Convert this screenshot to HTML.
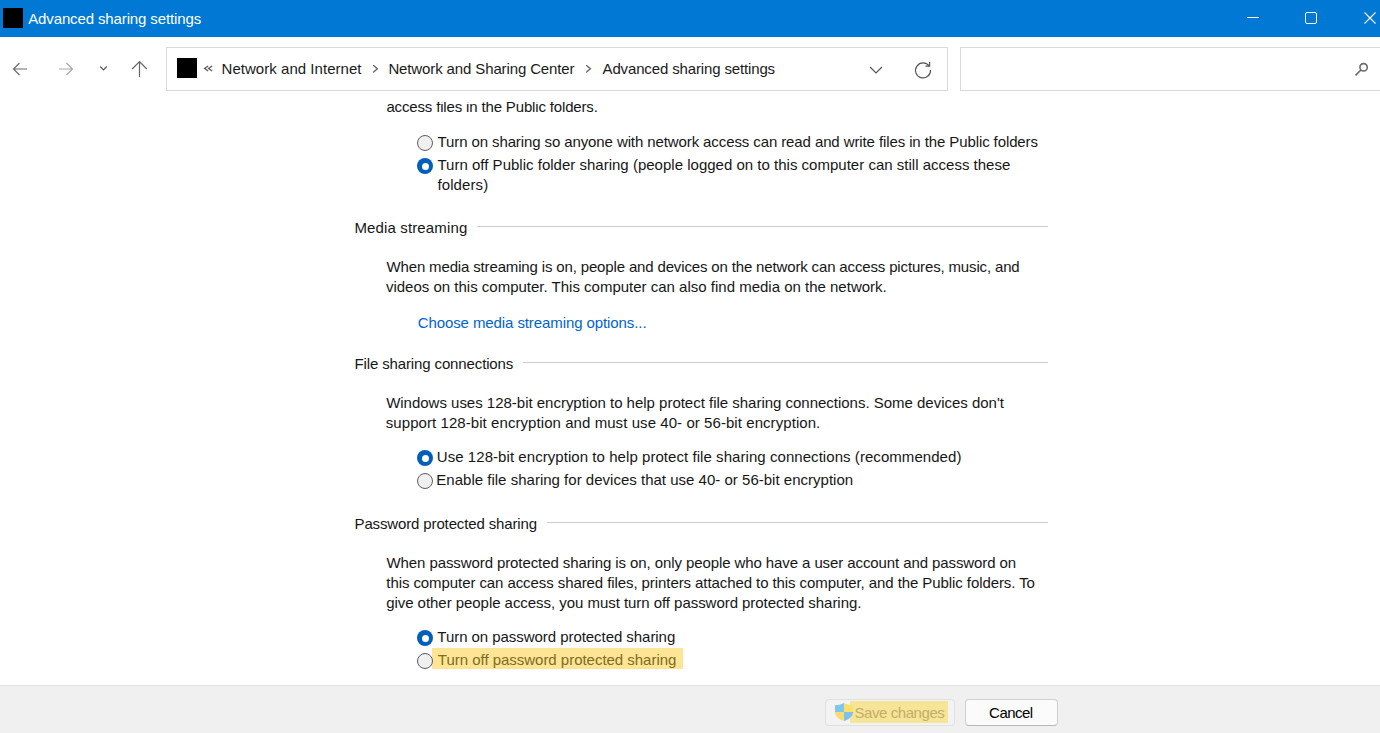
<!DOCTYPE html>
<html><head><meta charset="utf-8"><style>
html,body{margin:0;padding:0;width:1380px;height:733px;overflow:hidden;background:#fff;position:relative}
.t{position:absolute;white-space:pre;font-family:"Liberation Sans", sans-serif;font-size:15px;line-height:20px}
</style></head><body>
<div style="position:absolute;left:0;top:0;width:1380px;height:37px;background:#0078D4"></div><div style="position:absolute;left:3px;top:8px;width:20px;height:20px;background:#000"></div><div class="t" style="left:28.20px;top:8.80px;letter-spacing:-0.1243px;color:#fff;font-size:15px;">Advanced sharing settings</div>
<div style="position:absolute;left:1247px;top:17px;width:12px;height:1px;background:#fff"></div><div style="position:absolute;left:1305px;top:12px;width:10px;height:10px;border:1px solid #fff;border-radius:2px"></div><svg style="position:absolute;left:1364px;top:12px" width="12" height="12" viewBox="0 0 12 12"><path d="M0.5 0.5L11.5 11.5M11.5 0.5L0.5 11.5" stroke="#fff" stroke-width="1.1"/></svg><svg style="position:absolute;left:12px;top:62px" width="16" height="14" viewBox="0 0 16 14"><path d="M15 7H1.5M7.5 1L1.5 7L7.5 13" fill="none" stroke="#6b6b6b" stroke-width="1.2"/></svg><svg style="position:absolute;left:58px;top:62px" width="16" height="14" viewBox="0 0 16 14"><path d="M1 7H14.5M8.5 1L14.5 7L8.5 13" fill="none" stroke="#a8a8a8" stroke-width="1.2"/></svg><svg style="position:absolute;left:99px;top:65px" width="10" height="7" viewBox="0 0 10 7"><path d="M1.2 1.5L4.5 4.8L7.8 1.5" fill="none" stroke="#555" stroke-width="1.2"/></svg><svg style="position:absolute;left:131px;top:60px" width="18" height="18" viewBox="0 0 18 18"><path d="M8.5 17V1.8M1.2 9L8.5 1.7L15.8 9" fill="none" stroke="#666" stroke-width="1.2"/></svg><div style="position:absolute;left:166px;top:47px;width:780px;height:42px;border:1px solid #d9d9d9;background:#fff"></div><div style="position:absolute;left:177px;top:58px;width:20px;height:20px;background:#000"></div><svg style="position:absolute;left:200px;top:60px" width="16" height="16" viewBox="0 0 16 16"><path d="M7.8 6.3L4.6 8.5L7.8 10.7M11.8 6.3L8.6 8.5L11.8 10.7" fill="none" stroke="#5a5a5a" stroke-width="1.3" stroke-linecap="round"/></svg><div class="t" style="left:221.55px;top:58.80px;letter-spacing:0.037px;color:#1a1a1a;font-size:15px;">Network and Internet</div>
<svg style="position:absolute;left:372px;top:64px" width="8" height="10" viewBox="0 0 8 10"><path d="M1.6 1.6L5.4 4.8L1.6 8" fill="none" stroke="#5f5f5f" stroke-width="1.25" stroke-linecap="round"/></svg><div class="t" style="left:388.40px;top:58.80px;letter-spacing:-0.124px;color:#1a1a1a;font-size:15px;">Network and Sharing Center</div>
<svg style="position:absolute;left:585px;top:64px" width="8" height="10" viewBox="0 0 8 10"><path d="M1.6 1.6L5.4 4.8L1.6 8" fill="none" stroke="#5f5f5f" stroke-width="1.25" stroke-linecap="round"/></svg><div class="t" style="left:602.55px;top:58.80px;letter-spacing:-0.1421px;color:#1a1a1a;font-size:15px;">Advanced sharing settings</div>
<svg style="position:absolute;left:869px;top:66px" width="14" height="8" viewBox="0 0 14 8"><path d="M1 1L7 7L13 1" fill="none" stroke="#555" stroke-width="1.2"/></svg><svg style="position:absolute;left:913px;top:60px" width="20" height="20" viewBox="0 0 20 20"><path d="M16.2 6.2A7.5 7.5 0 1 0 17.5 10" fill="none" stroke="#555" stroke-width="1.2"/><path d="M12.5 6.2H16.6V2" fill="none" stroke="#555" stroke-width="1.2"/></svg><div style="position:absolute;left:960px;top:47px;width:430px;height:42px;border:1px solid #d9d9d9;background:#fff"></div><svg style="position:absolute;left:1353px;top:61px" width="18" height="17" viewBox="0 0 18 17"><circle cx="10.6" cy="6.3" r="3.7" fill="none" stroke="#6a6a6a" stroke-width="1.6"/><path d="M7.9 9L2.5 14.4" stroke="#6a6a6a" stroke-width="1.6"/></svg><div style="position:absolute;left:0;top:102px;width:1380px;height:583px;overflow:hidden"><div class="t" style="left:386.45px;top:-5.20px;letter-spacing:-0.1573px;color:#161616;font-size:15px;">access files in the Public folders.</div>
<div style="position:absolute;left:417px;top:33px;width:14px;height:14px;border-radius:50%;border:1px solid #5c5c5c;background:#f0f0f0"></div>
<div class="t" style="left:437.50px;top:29.80px;letter-spacing:-0.1018px;color:#161616;font-size:15px;">Turn on sharing so anyone with network access can read and write files in the Public folders</div>
<div style="position:absolute;left:417px;top:56px;width:16px;height:16px;border-radius:50%;background:#005FB8"></div><div style="position:absolute;left:421.5px;top:60.5px;width:7px;height:7px;border-radius:50%;background:#fff"></div>
<div class="t" style="left:437.50px;top:52.80px;letter-spacing:0.0096px;color:#161616;font-size:15px;">Turn off Public folder sharing (people logged on to this computer can still access these</div>
<div class="t" style="left:437.50px;top:72.80px;letter-spacing:0.0903px;color:#161616;font-size:15px;">folders)</div>
<div class="t" style="left:354.45px;top:115.80px;letter-spacing:0.1382px;color:#161616;font-size:15px;">Media streaming</div>
<div style="position:absolute;left:477px;top:124px;width:571px;height:1px;background:#cbcbcb"></div>
<div class="t" style="left:386.50px;top:154.80px;letter-spacing:-0.1501px;color:#161616;font-size:15px;">When media streaming is on, people and devices on the network can access pictures, music, and</div>
<div class="t" style="left:385.95px;top:174.80px;letter-spacing:-0.0007px;color:#161616;font-size:15px;">videos on this computer. This computer can also find media on the network.</div>
<div class="t" style="left:417.65px;top:210.80px;letter-spacing:-0.0883px;color:#0064D0;font-size:15px;">Choose media streaming options...</div>
<div class="t" style="left:354.45px;top:251.80px;letter-spacing:-0.1254px;color:#161616;font-size:15px;">File sharing connections</div>
<div style="position:absolute;left:523px;top:260px;width:525px;height:1px;background:#cbcbcb"></div>
<div class="t" style="left:386.15px;top:290.80px;letter-spacing:-0.0137px;color:#161616;font-size:15px;">Windows uses 128-bit encryption to help protect file sharing connections. Some devices don't</div>
<div class="t" style="left:385.80px;top:310.80px;letter-spacing:0.0662px;color:#161616;font-size:15px;">support 128-bit encryption and must use 40- or 56-bit encryption.</div>
<div style="position:absolute;left:417px;top:348px;width:16px;height:16px;border-radius:50%;background:#005FB8"></div><div style="position:absolute;left:421.5px;top:352.5px;width:7px;height:7px;border-radius:50%;background:#fff"></div>
<div class="t" style="left:436.80px;top:344.80px;letter-spacing:0.0567px;color:#161616;font-size:15px;">Use 128-bit encryption to help protect file sharing connections (recommended)</div>
<div style="position:absolute;left:417px;top:371px;width:14px;height:14px;border-radius:50%;border:1px solid #5c5c5c;background:#f0f0f0"></div>
<div class="t" style="left:436.30px;top:367.80px;letter-spacing:0.0119px;color:#161616;font-size:15px;">Enable file sharing for devices that use 40- or 56-bit encryption</div>
<div class="t" style="left:354.55px;top:411.80px;letter-spacing:-0.1378px;color:#161616;font-size:15px;">Password protected sharing</div>
<div style="position:absolute;left:547px;top:420px;width:501px;height:1px;background:#cbcbcb"></div>
<div class="t" style="left:386.55px;top:450.80px;letter-spacing:-0.093px;color:#161616;font-size:15px;">When password protected sharing is on, only people who have a user account and password on</div>
<div class="t" style="left:386.35px;top:470.80px;letter-spacing:-0.0816px;color:#161616;font-size:15px;">this computer can access shared files, printers attached to this computer, and the Public folders. To</div>
<div class="t" style="left:386.15px;top:490.80px;letter-spacing:-0.0438px;color:#161616;font-size:15px;">give other people access, you must turn off password protected sharing.</div>
<div style="position:absolute;left:417px;top:528px;width:16px;height:16px;border-radius:50%;background:#005FB8"></div><div style="position:absolute;left:421.5px;top:532.5px;width:7px;height:7px;border-radius:50%;background:#fff"></div>
<div class="t" style="left:437.35px;top:524.80px;letter-spacing:-0.0506px;color:#161616;font-size:15px;">Turn on password protected sharing</div>
<div style="position:absolute;left:432px;top:546px;width:251px;height:21px;background:#FDE595"></div><div style="position:absolute;left:417px;top:551px;width:14px;height:14px;border-radius:50%;border:1px solid #5c5c5c;background:#f0f0f0"></div>
<div class="t" style="left:437.85px;top:547.80px;letter-spacing:-0.0221px;color:#7d6c22;font-size:15px;">Turn off password protected sharing</div>
</div><div style="position:absolute;left:0;top:685px;width:1380px;height:48px;background:#f0f0f0;border-top:1px solid #e3e3e3"></div><div style="position:absolute;left:825px;top:699px;width:128px;height:25px;border:1px solid #e0e0e0;border-radius:4px;background:#f3f3f3"></div><div style="position:absolute;left:850px;top:701px;width:98px;height:22px;background:#F7E597"></div><svg style="position:absolute;left:835px;top:703px" width="18" height="18" viewBox="0 0 18 18"><defs><clipPath id="sh"><path d="M0 2.2Q4.5 2.2 9 0Q13.5 2.2 18 2.2V9C18 13.6 13.6 16.6 9 18C4.4 16.6 0 13.6 0 9Z"/></clipPath></defs><g clip-path="url(#sh)"><rect x="0" y="0" width="9" height="9" fill="#80C7EE"/><rect x="9" y="0" width="9" height="9" fill="#FBE06A"/><rect x="0" y="9" width="9" height="9" fill="#F8DC72"/><rect x="9" y="9" width="9" height="9" fill="#7FC0EC"/></g></svg><div class="t" style="left:854.55px;top:702.80px;letter-spacing:-0.4389px;color:#c4ad6a;font-size:15px;">Save changes</div>
<div style="position:absolute;left:965px;top:699px;width:91px;height:25px;border:1px solid #cfcfcf;border-bottom-color:#b8b8b8;border-radius:4px;background:#fbfbfb"></div><div class="t" style="left:989.10px;top:702.80px;letter-spacing:-0.548px;color:#000;font-size:15px;">Cancel</div>

</body></html>
